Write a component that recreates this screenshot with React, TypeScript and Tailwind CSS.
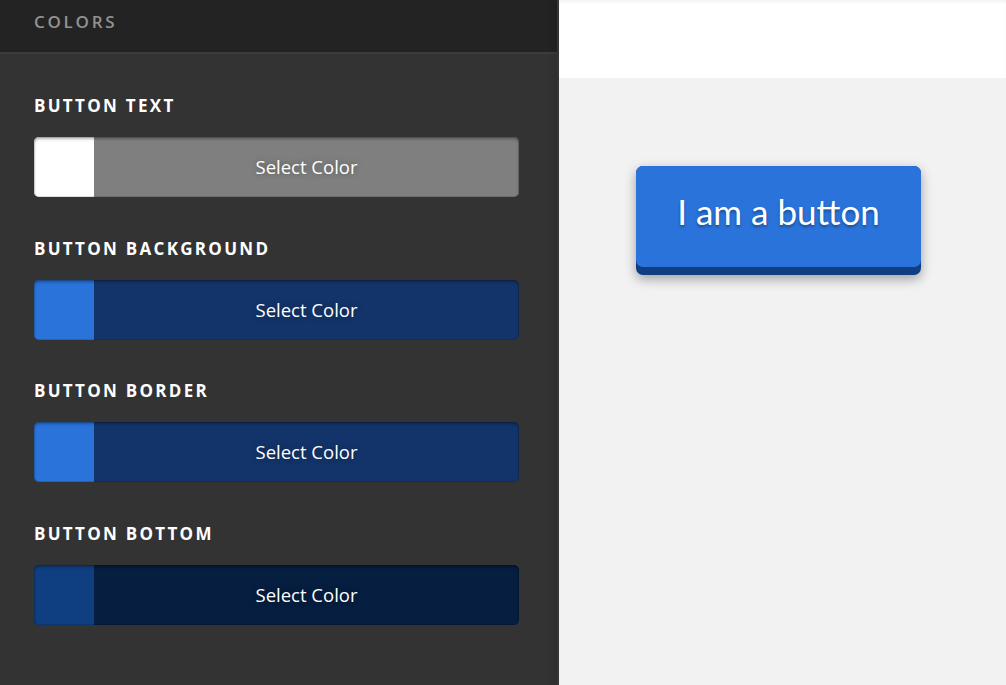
import React from 'react';

interface Picker {
    label: string;
    swatch: string;
    fill: string;
}

const PICKERS: Picker[] = [
    { label: 'Button Text', swatch: 'bg-white', fill: 'bg-[#7f7f7f]' },
    { label: 'Button Background', swatch: 'bg-[#2a73db]', fill: 'bg-[#13346a]' },
    { label: 'Button Border', swatch: 'bg-[#2a73db]', fill: 'bg-[#13346a]' },
    { label: 'Button Bottom', swatch: 'bg-[#0f3f80]', fill: 'bg-[#061e40]' },
];

function ColorPicker({ label, swatch, fill }: Picker) {
    return (
        <div className="flex flex-col">
            <h3 className="text-[17px] font-bold uppercase tracking-[0.135em] text-white leading-none h-[17px] mb-[23px]">
                {label}
            </h3>
            <div className={`relative flex h-[60px] w-[485px] overflow-hidden rounded-[5px] ${fill}`}>
                <div className={`w-[60px] shrink-0 ${swatch}`} />
                <div className="flex flex-1 items-center justify-center">
                    <span className="text-[18.5px] text-white [text-shadow:0_0_6px_rgba(0,0,0,0.35)]">Select Color</span>
                </div>
                <div className="pointer-events-none absolute inset-0 rounded-[5px] shadow-[inset_0_2px_3px_rgba(0,0,0,0.3),inset_0_0_0_1px_rgba(0,0,0,0.12)]" />
            </div>
        </div>
    );
}

export default function App() {
    return (
        <div className="flex h-[685px] w-[1006px] overflow-hidden bg-[#f2f2f2] font-['Open_Sans',sans-serif]">
            <aside className="flex w-[559px] shrink-0 flex-col border-r-2 border-[#3b3b3b] bg-[#333333]">
                <header className="h-[54px] shrink-0 border-b-2 border-[#3c3c3c] bg-[#232323] px-[34px] pt-[9px]">
                    <span className="text-[17px] font-semibold uppercase tracking-[0.16em] text-[#929292]">Colors</span>
                </header>
                <div className="flex flex-col gap-[42.5px] px-[34px] pt-[43px]">
                    {PICKERS.map((p) => (
                        <ColorPicker key={p.label} {...p} />
                    ))}
                </div>
            </aside>

            <main className="relative z-10 flex flex-1 flex-col shadow-[-4px_0_8px_rgba(0,0,0,0.12)]">
                <div className="h-[78px] shrink-0 bg-white shadow-[inset_0_3px_4px_-2px_rgba(0,0,0,0.08)]" />
                <div className="flex flex-1 items-start pl-[77px] pt-[88px]">
                    <button className="h-[109px] w-[285px] rounded-[7px] bg-[#0f3f80] pb-[8px] shadow-[0_4px_12px_rgba(0,0,0,0.35)]">
                        <span className="flex h-full w-full items-center justify-center rounded-[7px] bg-[#2a73db] pb-[10px] font-['Lato',sans-serif] text-[35px] text-white [text-shadow:0_2px_3px_rgba(0,0,0,0.35)]">
                            I am a button
                        </span>
                    </button>
                </div>
            </main>
        </div>
    );
}
